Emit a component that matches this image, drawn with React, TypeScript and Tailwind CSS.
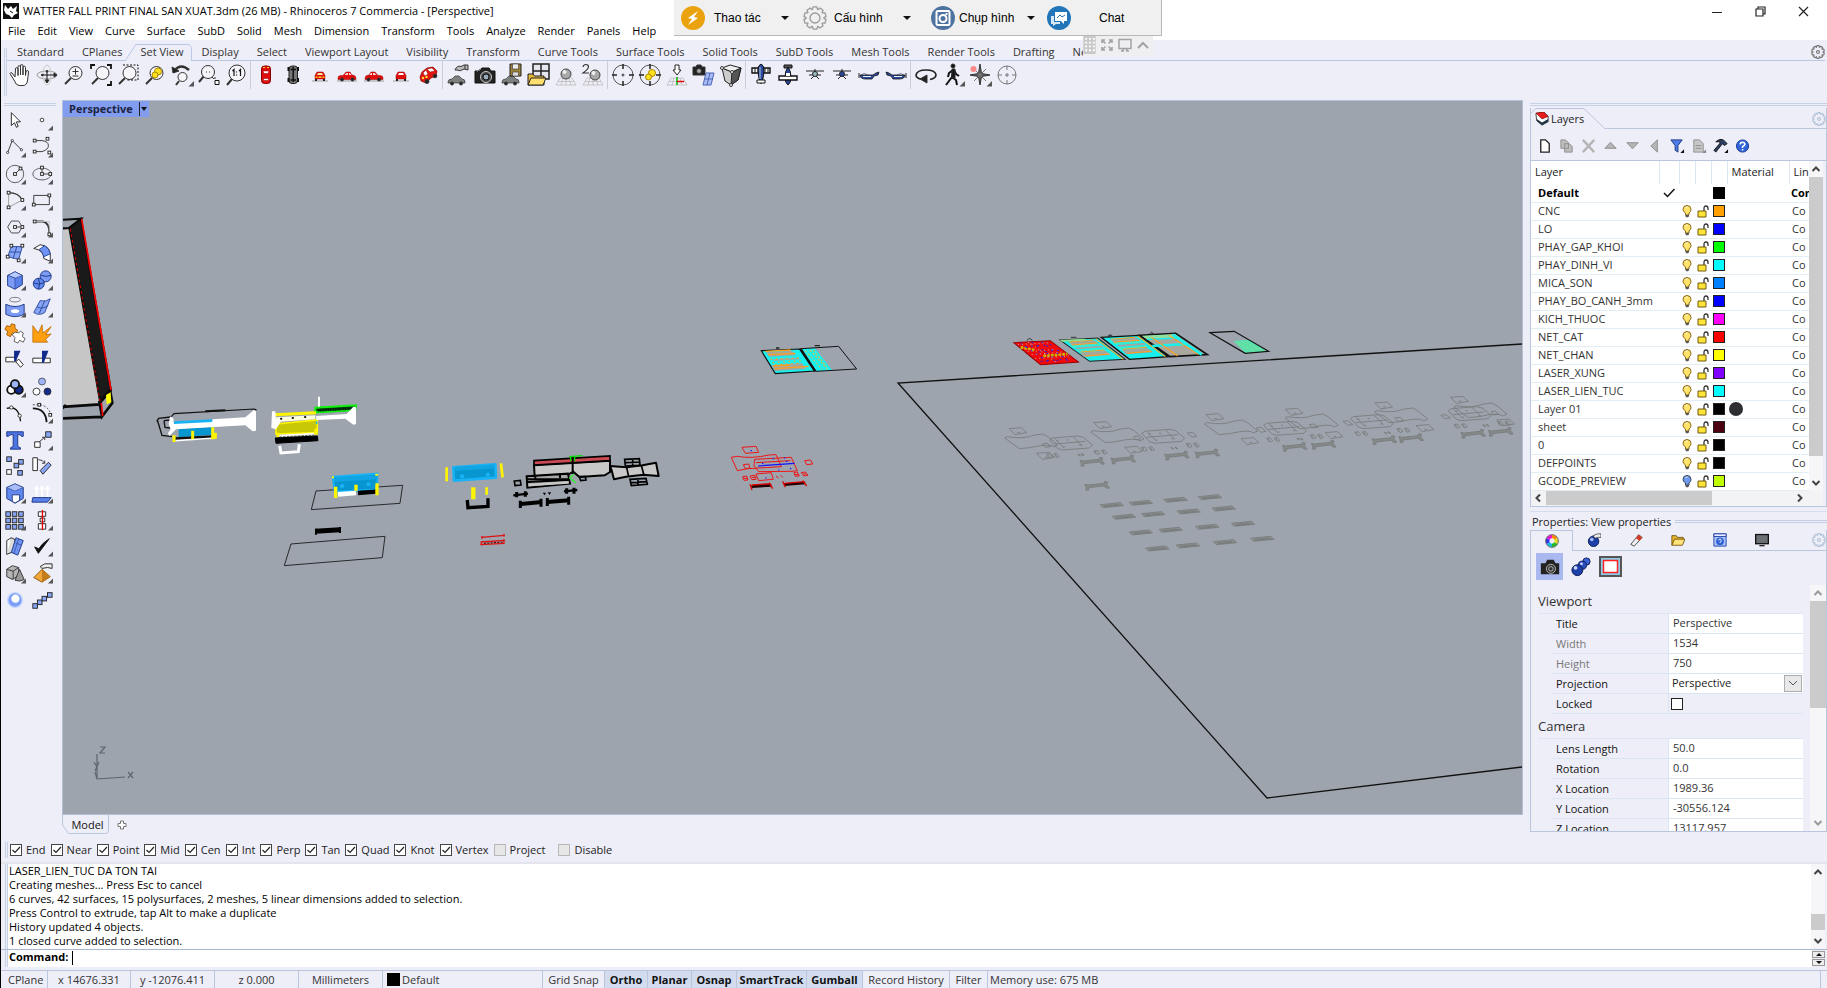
import React, { useState } from 'react';

type Kids = { children?: React.ReactNode };

const menus = ['File', 'Edit', 'View', 'Curve', 'Surface', 'SubD', 'Solid', 'Mesh', 'Dimension', 'Transform', 'Tools', 'Analyze', 'Render', 'Panels', 'Help'];

const tabs = ['Standard', 'CPlanes', 'Set View', 'Display', 'Select', 'Viewport Layout', 'Visibility', 'Transform', 'Curve Tools', 'Surface Tools', 'Solid Tools', 'SubD Tools', 'Mesh Tools', 'Render Tools', 'Drafting', 'New in V7'];

const layers = [
  { name: 'CNC', color: '#ff9f00' },
  { name: 'LO', color: '#0000ff' },
  { name: 'PHAY_GAP_KHOI', color: '#00ff00' },
  { name: 'PHAY_DINH_VI', color: '#00ffff' },
  { name: 'MICA_SON', color: '#007fff' },
  { name: 'PHAY_BO_CANH_3mm', color: '#0000ff' },
  { name: 'KICH_THUOC', color: '#ff00ff' },
  { name: 'NET_CAT', color: '#ff0000' },
  { name: 'NET_CHAN', color: '#ffff00' },
  { name: 'LASER_XUNG', color: '#7f00ff' },
  { name: 'LASER_LIEN_TUC', color: '#00ffff' },
  { name: 'Layer 01', color: '#000000', material: true },
  { name: 'sheet', color: '#4c0010' },
  { name: '0', color: '#000000' },
  { name: 'DEFPOINTS', color: '#000000' },
  { name: 'GCODE_PREVIEW', color: '#bfff00', off: true },
];

const snaps = ['End', 'Near', 'Point', 'Mid', 'Cen', 'Int', 'Perp', 'Tan', 'Quad', 'Knot', 'Vertex'];

const history = [
  'LASER_LIEN_TUC DA TON TAI',
  'Creating meshes... Press Esc to cancel',
  '6 curves, 42 surfaces, 15 polysurfaces, 2 meshes, 5 linear dimensions added to selection.',
  'Press Control to extrude, tap Alt to make a duplicate',
  'History updated 4 objects.',
  '1 closed curve added to selection.',
];

/* ---------- icon helpers ---------- */

const Icon = ({ children, small }: Kids & { small?: boolean }) => (
  <svg viewBox="0 0 24 24" className={small ? 'size-[22px] shrink-0' : 'size-6 shrink-0'} fill="none" stroke="#333" strokeWidth="1">{children}</svg>
);
const Corner = () => <path d="M24 18v5.500h-5.500z" fill="#555" stroke="none" />;
const Mag = () => (
  <>
    <path d="M9 15l-6 6" strokeWidth="2" />
    <circle cx="13.500" cy="10" r="6.500" fill="#f6f6fa" />
  </>
);

const SideCar = () => (
  <>
    <path d="M2 18h20" stroke="#999" />
    <path d="M3 15q0-2.500 3-2.500h2L11 9h4l2 3q4 0 4 3.500v1H3z" fill="#e00d0d" stroke="#900" strokeWidth=".5" />
    <path d="M9.500 12l2-2h1.500v2zM14 10h1l1.500 2H14z" fill="#ffd9d9" stroke="none" />
    <circle cx="7" cy="16.500" r="1.500" fill="#222" /><circle cx="17.500" cy="16.500" r="1.500" fill="#222" />
  </>
);
const FrontCar = ({ lit }: { lit?: boolean }) => (
  <>
    <path d="M4 18h16" stroke="#999" />
    <path d="M7 16v-3.500L9 9h6l2 3.500V16z" fill="#e00d0d" stroke="#900" strokeWidth=".5" />
    <path d="M9 12l1-2h4l1 2z" fill={lit ? '#ffe9a0' : '#fff'} stroke="none" />
    {lit && <path d="M7.500 13.500h2v1.500h-2zM14.500 13.500h2v1.500h-2zM10.500 13.500h3v1.500h-3z" fill="#ffd21f" stroke="none" />}
    <path d="M8 16v2M16 16v2" stroke="#222" strokeWidth="2" />
  </>
);
const GreyCar = () => (
  <>
    <path d="M2 19q0-3 4-3l3-3h4l3 3q3 0 3 3v1H2z" fill="#7d8280" stroke="#333" strokeWidth=".7" />
    <circle cx="6" cy="20.500" r="1.500" fill="#222" /><circle cx="15" cy="20.500" r="1.500" fill="#222" />
  </>
);
const Grid = () => <path d="M2 22l4-7h12l4 7zM9 15l-2 7M12 15v7M15 15l2 7M4 18.500h16" stroke="#b4b4b4" strokeWidth=".7" />;
const Target = () => (
  <>
    <circle cx="12" cy="12" r="10" stroke="#555" />
    <path d="M12 1v5M12 18v5M1 12h5M18 12h5" stroke="#222" strokeWidth="1.500" />
  </>
);
const PlaneSide = () => (
  <>
    <path d="M3 12q0 4 6 4h6l2-3 4-1 1-3-3 1-3 2z" fill="#29489f" stroke="#111" strokeWidth=".8" />
    <path d="M4 12q3-3 7 0z" fill="#cfe0ff" strokeWidth=".6" /><path d="M6 13.500h8" stroke="#eee" /><path d="M2 10v5" stroke="#222" />
  </>
);

const setViewIcons: (React.ReactNode | null)[] = [
  <path d="M7 14l-3-4q-1.500-1-2 .5L6 17q2 5.500 5 5.500h4q3.500 0 4.500-4.500l1-9q0-1.500-1.200-1.500T18 9l-.5 3.500V4.500q0-1.300-1.300-1.300T15 4.500V12 3q0-1.500-1.300-1.500T12.500 3v9-8q0-1.300-1.300-1.300T10 4v8.500V6q0-1.300-1.300-1.300T7.500 6z" fill="#fff" />,
  <>
    <ellipse cx="12" cy="12" rx="10" ry="4" stroke="#999" /><ellipse cx="12" cy="12" rx="4" ry="10" stroke="#ccc" />
    <path d="M12 8v10M7 12h13" stroke="#111" /><path d="M11 9l1-2 1 2zM10 17l2 3 2-3zM19 10l3 2-3 2zM8 11l-2 1 2 1z" fill="#111" />
  </>,
  <><Mag /><path d="M10.500 8.500h6M13.500 5.500v6M10.500 13h6" /></>,
  <><Mag /><path d="M2 6V2h4M18 2h4v4M22 18v4h-4" stroke="#111" strokeWidth="1.800" /></>,
  <><Mag /><path d="M7 2h15v15H11" stroke="#111" strokeDasharray="2 1.500" /></>,
  <><Mag /><circle cx="15" cy="8.500" r="3.500" fill="#ffe21f" stroke="#a80" /><circle cx="12" cy="12" r="3" fill="#ffe21f" stroke="#a80" /></>,
  <><path d="M5 7q6-7 14 0" strokeWidth="2.500" /><path d="M2 4l1 6 6-2z" fill="#222" /><path d="M9 18l-3 4" strokeWidth="2" /><circle cx="12.500" cy="14" r="4.500" fill="#f6f6fa" /><Corner /></>,
  <><path d="M7 13l-5 6" strokeWidth="2" /><circle cx="11" cy="9" r="6.500" fill="#f6f6fa" /><path d="M9 9h1M12 9h1M18 16v-2M15 14l2 2" /><path d="M18 17.500h4v4h-4z" fill="#fff" stroke="#111" /></>,
  <><path d="M8 16l-5 6" strokeWidth="2" /><circle cx="13" cy="10" r="8" fill="#f6f6fa" /><path d="M8.500 8l1.500-1.500V13M12.500 8.500v1M12.500 11.500v1M15 8l1.500-1.500V13" stroke="#111" strokeWidth="1.200" /></>,
  null,
  <><rect x="7.500" y="3" width="9" height="17.500" rx="3" fill="#e00d0d" stroke="#800" /><path d="M9 8h6l-1 2.500h-4zM10 15.500h4l1 2H9z" fill="#fff" stroke="#900" strokeWidth=".5" /><path d="M9 4.500h2M13 4.500h2" stroke="#fd3" /></>,
  <><rect x="8" y="3" width="8.500" height="17.500" rx="3" fill="#777" stroke="#222" /><path d="M12.200 4v15M9.500 6.500h5.500M9.500 17h5.500" stroke="#111" strokeWidth="1.500" /><path d="M7.500 4v4M17 4v4M7.500 15v4M17 15v4" stroke="#111" strokeWidth="2" /></>,
  <FrontCar lit />,
  <SideCar />,
  <g transform="matrix(-1 0 0 1 24 0)"><SideCar /></g>,
  <FrontCar />,
  <>
    <path d="M4 14l2-5 5-4 6-1 4 4-1 5-5 2-5 5-5-2z" fill="#e3140f" stroke="#800" strokeWidth=".7" />
    <path d="M11 6l5-1 3 3-5 1zM7 10l3-3 2 4-3 2z" fill="#fff" stroke="#900" strokeWidth=".5" />
    <circle cx="7" cy="15" r="1.200" fill="#fd3" stroke="none" /><circle cx="10.500" cy="14" r="1.200" fill="#fd3" stroke="none" />
    <circle cx="11" cy="18.500" r="2" fill="#222" /><circle cx="19" cy="13" r="1.800" fill="#222" />
  </>,
  null,
  <><GreyCar /><path d="M9 7q2-5 6-3.500l3-1.500 4 0v5l-4-1q-4 3-7 1z" fill="#bbb" /><path d="M19 2v4" /></>,
  <>
    <path d="M2 8h5l2-3h7l2 3h4v12H2z" fill="#222" stroke="#111" /><path d="M4 9q2-3 4-3" stroke="#777" />
    <circle cx="13" cy="14" r="5.500" fill="#444" stroke="#ccc" /><circle cx="13" cy="14" r="3" fill="#9ab" stroke="#111" />
  </>,
  <><GreyCar /><path d="M10 1h11v12H10z" fill="#9a8238" stroke="#222" /><path d="M12.500 1h6v5h-6z" fill="#eee" strokeWidth=".6" /><path d="M12.500 9h6v4h-6z" fill="#ddd" strokeWidth=".6" /></>,
  <>
    <path d="M6 1h16v15H6z" fill="#e6e6ee" stroke="#222" strokeWidth="1.500" /><path d="M14 1v15M6 8h16" stroke="#222" strokeWidth="1.500" />
    <path d="M1 22V11h5l1.500 2H17v9z" fill="#e7b93a" stroke="#222" /><path d="M1 22l3-7h15l-3 7z" fill="#ffdf6e" stroke="#222" />
  </>,
  <><Grid /><circle cx="12" cy="11" r="5" fill="#a8a8a8" stroke="#444" /><circle cx="10.500" cy="9" r="2" fill="#eee" stroke="none" /></>,
  <><Grid /><circle cx="14" cy="12" r="5" fill="#a8a8a8" stroke="#444" /><circle cx="12.500" cy="10" r="2" fill="#eee" stroke="none" /><path d="M2 4q.5-2.500 3-2.500T7.500 4Q7 6.500 2 10h6" strokeWidth="1.200" /></>,
  null,
  <><Target /><circle cx="12" cy="12" r="1" /></>,
  <><Target /><circle cx="14" cy="10" r="3.500" fill="#ffe21f" stroke="#a80" /><circle cx="10.500" cy="14" r="3" fill="#ffe21f" stroke="#a80" /></>,
  <><Grid /><path d="M10 7V2h4v5h2l-4 5-4-5z" fill="#fff" stroke="#222" /><path d="M12 14v8" stroke="#0b0" strokeWidth="1.500" /><path d="M12 18.500h7" stroke="#e00" strokeWidth="1.500" /></>,
  <><path d="M1 4h3l1-2h4l1 2h3v8H1z" fill="#222" /><circle cx="7" cy="8" r="2.500" fill="#aaa" /><path d="M14 10h8l-3 12h-8z" fill="#a9bdf5" stroke="#4a64b8" /><path d="M18 10l-3 12M13 16h8" stroke="#4a64b8" /></>,
  <><path d="M3 5l10 4 9-4-3 12-7 5-6-4z" fill="#ccc" stroke="#222" /><path d="M13 9l-1 13 7-5 3-12z" fill="#555" stroke="#222" /><path d="M3 5l8-3 11 3-9 4z" fill="#eee" stroke="#222" /><circle cx="13" cy="9" r="1.500" fill="#fff" /><circle cx="12" cy="22" r="1.500" fill="#fff" /><circle cx="3" cy="5" r="1.500" fill="#fff" /></>,
  null,
  <>
    <path d="M3 5h18v5H3z" fill="#fff" stroke="#111" strokeWidth="1.400" /><path d="M6 5v5M9 5v5M16 5v5M19 5v5" stroke="#111" />
    <path d="M12 1q3 1 3 6t-2 13h-2Q9 12 9 7t3-6z" fill="#29489f" stroke="#111" /><path d="M8 17h8v3H8z" fill="#fff" stroke="#111" /><path d="M11 4v12" stroke="#bcd" />
  </>,
  <>
    <path d="M8 2h8v3H8z" fill="#555" stroke="#111" /><path d="M12 4q3 4 3 10t-3 8q-3-2-3-8t3-10z" fill="#29489f" stroke="#111" /><path d="M3 13h18v4H3z" fill="#fff" stroke="#111" strokeWidth="1.400" /><path d="M10 10h4v3h-4z" fill="#fff" stroke="none" />
  </>,
  <><path d="M3 8h18M6 12h12" stroke="#222" /><circle cx="12" cy="11" r="2.500" fill="#9bb" stroke="#222" /><path d="M8 16l3-3M16 16l-3-3M12 6v3" stroke="#222" /></>,
  <><path d="M3 8h18M6 12h12" stroke="#222" /><circle cx="12" cy="11" r="2.500" fill="#29489f" stroke="#222" /><path d="M8 16l3-3M16 16l-3-3M12 6v3" stroke="#222" /></>,
  <PlaneSide />,
  <g transform="matrix(-1 0 0 1 24 0)"><PlaneSide /></g>,
  null,
  <><path d="M16 16.500q6-1 6-5Q21 7 12 7T2 12q0 3 5 4.200" stroke="#222" strokeWidth="1.600" /><path d="M13 12v8l-7-4z" fill="#222" /></>,
  <>
    <circle cx="12" cy="3" r="2" fill="#111" /><path d="M12 6l-1 8 4 3 1 5M11 14l-3 4-3 4M12 7l-4 3-1 4M13 7l2 4 3 2" stroke="#111" strokeWidth="2" /><path d="M11 6h3v9h-3z" fill="#111" /><Corner />
  </>,
  <><path d="M12 1l1.500 9.500L22 12l-8.500 1.500L12 22l-1.500-8.500L2 12l8.500-1.500z" fill="#666" /><path d="M6 6l12 12M18 6L6 18" stroke="#777" /><circle cx="5.500" cy="6" r="3" fill="#f88a8a" stroke="none" /><Corner /></>,
  <><circle cx="12" cy="12" r="9" stroke="#777" /><path d="M12 3v4M12 17v4M3 12h4M17 12h4M10 12h4M12 10v4" stroke="#777" /></>,
];

/* ---------- left palette ---------- */

const Dot = ({ x, y }: { x: number; y: number }) => <rect x={x - 1.5} y={y - 1.5} width="3" height="3" fill="#fff" stroke="#222" />;
const Sq = ({ x, y, f = '#88a4f4' }: { x: number; y: number; f?: string }) => <rect x={x} y={y} width="5" height="5" fill={f} stroke="#222" />;

const mainTools: React.ReactNode[] = [
  <path d="M8 4v14l3.500-3 2 5 2-1-2-5h4.500z" fill="#fff" stroke="#222" />,
  <><circle cx="12" cy="12" r="2" fill="#fff" /><Corner /></>,
  <><path d="M4 18L9 5l10 10" /><circle cx="4" cy="18" r="1.200" fill="#fff" /><circle cx="9" cy="5" r="1.200" fill="#fff" /><circle cx="19" cy="15" r="1.200" fill="#fff" /><Corner /></>,
  <><path d="M4 5h8q7 1 7 5.500T12 17H4" /><Dot x={4} y={5} /><Dot x={18} y={3} /><Dot x={4} y={17} /><Dot x={20} y={18} /><Corner /></>,
  <><circle cx="12" cy="12" r="9.500" stroke="#555" /><path d="M12 12l6-6" /><Dot x={12} y={12} /><Dot x={18} y={6} /><Corner /></>,
  <><ellipse cx="12" cy="12" rx="10" ry="6.500" stroke="#555" /><path d="M12 12V5M12 12h9" /><Dot x={12} y={12} /><Dot x={12} y={5} /><Dot x={21} y={12} /><Corner /></>,
  <><path d="M5 20V4" stroke="#999" /><path d="M5 4q11 0 15 8" strokeWidth="1.500" /><path d="M5 20l15-8" stroke="#999" /><Dot x={5} y={4} /><Dot x={5} y={20} /><Dot x={20} y={12} /><Corner /></>,
  <><path d="M3 7h17v10H3z" stroke="#333" /><Dot x={3} y={17} /><Dot x={20} y={7} /><Corner /></>,
  <><path d="M4 12l4-6.500h8l4 6.500-4 6.500H8z" stroke="#444" /><path d="M12 12h8" /><Dot x={12} y={12} /><Dot x={20} y={12} /><Corner /></>,
  <><path d="M3 6h10q7 1 7 13" strokeWidth="2" /><path d="M3 6h17v13" stroke="#bbb" /><Dot x={4} y={6} /><Dot x={20} y={20} /><Corner /></>,
  <><path d="M8 5h12l-4 14-12-3z" fill="#88a4f4" stroke="#29489f" /><path d="M14 5l-4 13M6 11h12" stroke="#29489f" /><Dot x={8} y={4} /><Dot x={20} y={4} /><Dot x={4} y={16} /><Dot x={16} y={20} /><Corner /></>,
  <><path d="M3 7l7-4q10 1 11 10v8l-7-3q0-9-11-11z" fill="#fff" stroke="#222" /><path d="M9 8l6-4q5 3 6 9l-7 3q-1-5-5-8z" fill="#6e93f2" stroke="#29489f" /><Corner /></>,
  <><path d="M4 7l8-4 8 4v10l-8 5-8-4z" fill="#5a80ea" stroke="#1b3480" /><path d="M4 7l8 3 8-3-8-4z" fill="#b9ccff" stroke="#1b3480" strokeWidth=".6" /><path d="M4 7l8 3v12l-8-4z" fill="#7b9bf5" stroke="#1b3480" strokeWidth=".6" /><Corner /></>,
  <><circle cx="16" cy="8" r="6" fill="#7b9bf5" stroke="#1b3480" /><circle cx="8.500" cy="16" r="6" fill="#6188ee" stroke="#1b3480" /><path d="M2.500 15q6 3 12 0M8 10q3 6 0 12M11 7q5 2 11 0" stroke="#1b3480" /><Corner /></>,
  <><ellipse cx="12" cy="4" rx="6" ry="2.500" stroke="#777" /><path d="M2 9q10 5 20 0v11q-10 5-20 0z" fill="#7b9bf5" stroke="#1b3480" /><ellipse cx="12" cy="16.500" rx="5.500" ry="3" fill="#fff" stroke="#7b9bf5" strokeWidth="2" /><Corner /></>,
  <><path d="M10 5q6 2 11-2l-6 15q-6 4-12 0z" fill="#88a4f4" stroke="#29489f" /><path d="M7 12q6 3 12-2M15 5l-6 14" stroke="#29489f" /><Corner /></>,
  <>
    <path d="M3 4l4 1 1-3 4 1v4l3 2-2 4-4-1-2 4-4-2 1-4-3-2z" fill="#f79a1c" stroke="#a65c00" />
    <path d="M12 11l4 1 2-2 3 2-1 4 3 2-2 4-4-2-2 3-4-2 1-4-3-3z" fill="#fff" stroke="#555" />
  </>,
  <path d="M2 22V4l6 8 4-9 1 9 9-7-6 9 6-1-6 6 2 3z" fill="#ff9f0f" stroke="#b26400" strokeWidth=".8" />,
  <><path d="M2 9h11v5H2z" fill="#fff" stroke="#222" /><path d="M13 14l3-3 5 6-3 3z" fill="#fff" stroke="#222" /><path d="M11 2h7l-5 11h-2z" fill="#122a8a" stroke="none" /></>,
  <><path d="M2 10h19v5H2z" fill="#fff" stroke="#222" /><path d="M12 2h7l-5 13h-2z" fill="#122a8a" stroke="none" /></>,
  <><circle cx="8" cy="15" r="4.500" fill="#fff" stroke="#111" strokeWidth="2" /><circle cx="16" cy="15" r="4.500" fill="#122a8a" stroke="#111" strokeWidth="2" /><circle cx="12" cy="9" r="4.500" fill="#9fb4f8" stroke="#111" strokeWidth="2" /><Corner /></>,
  <><circle cx="12" cy="6" r="3.800" fill="#9fb4f8" stroke="#556" /><circle cx="6" cy="17" r="3.800" fill="#fff" /><circle cx="18" cy="17" r="3.800" fill="#122a8a" /></>,
  <><path d="M3 7q13-4 15 14" stroke="#111" strokeWidth="1.500" /><circle cx="8" cy="6" r="1.800" fill="#fff" /><circle cx="17" cy="15" r="1.800" fill="#fff" /></>,
  <><path d="M2 7q14 0 15 15" stroke="#111" strokeWidth="2" /><path d="M2 3h8q11 2 12 14" strokeDasharray="2 2" /><Dot x={9} y={3} /><Dot x={21} y={14} /><Corner /></>,
  <path d="M3 3h18v5h-2q-.5-2-4-2v13l3 1.500V22H7v-1.500L10 19V6Q5.500 6 5 8H3z" fill="#4c74e2" stroke="#1b3480" />,
  <><path d="M4 14h6v6H4z" fill="#fff" stroke="#222" /><path d="M16 3h6v6h-6z" fill="#88a4f4" stroke="#222" /><path d="M9 14l6-5m-3 0h3v3" /><Corner /></>,
  <><Sq x={3} y={2} /><Sq x={16} y={5} /><Sq x={11} y={9} /><Sq x={3} y={16} f="#fff" /><Sq x={15} y={17} /></>,
  <><path d="M2 3h5v14H2z" fill="#fff" stroke="#222" /><path d="M10 17L19 8l3 3-9 10z" fill="#88a4f4" stroke="#222" /><path d="M8 5q5 0 7 4M15 6v3h-3" /></>,
  <><path d="M3 6l9-4 9 4v12l-9 5-9-5z" fill="#6188ee" stroke="#1b3480" /><path d="M3 6l9 4 9-4-9-4z" fill="#a9bdf8" stroke="#1b3480" strokeWidth=".6" /><path d="M9 14h8v6l-5 3-3-2z" fill="#fff" stroke="#1b3480" /><Corner /></>,
  <><path d="M2 17h17l3 0-4 5H1z" fill="#5a80ea" stroke="#1b3480" /><path d="M6 16V6M12 16V6M18 16V6M4 8l2-3 2 3M10 8l2-3 2 3M16 8l2-3 2 3" stroke="#fff" strokeWidth="1.800" /><Corner /></>,
  <><Sq x={2} y={3} /><Sq x={9} y={3} /><Sq x={16} y={3} /><Sq x={2} y={10} /><Sq x={9} y={10} /><Sq x={16} y={10} /><Sq x={2} y={17} /><Sq x={9} y={17} /><Sq x={16} y={17} /><Corner /></>,
  <><path d="M8 3h8v5H8zM10 10h5v4h-5zM8 16h8v6H8z" fill="#fff" stroke="#222" /><path d="M12.500 1v22" stroke="#e00" strokeWidth="1.500" /><Corner /></>,
  <><path d="M3 6l5-3v14l-5 4z" fill="#fff" stroke="#222" /><path d="M8 3l4 2-1 13-8 3" fill="#ddd" stroke="#222" /><path d="M13 3l8 3-6 16-7-3z" fill="#6e93f2" stroke="#1b3480" /><path d="M16 4l-5 16M13 9l6 2" stroke="#1b3480" strokeWidth=".6" /><Corner /></>,
  <><path d="M4 13l4 7L20 4q-8 5-11.500 11z" fill="#111" stroke="#111" /><Corner /></>,
  <><path d="M3 8l6-4 7 2v9l-7 4-6-3z" fill="#b5b5b5" stroke="#333" /><path d="M3 8l7 2 6-4M10 10v9" /><path d="M17 8l5 11q-4 3-10 1z" fill="#999" stroke="#333" /><Corner /></>,
  <><path d="M12 8l9 8-9 6-9-5z" fill="#f2a63a" stroke="#8a5500" /><path d="M12 8l9 8-9 6z" fill="#c47d1c" stroke="none" /><path d="M10 5l5-3h8v5l-5-1-6 1z" fill="#eee" stroke="#222" /><Corner /></>,
  <><circle cx="12" cy="12" r="8" fill="#7d9ff5" stroke="#c6d6ff" strokeWidth="1.500" /><circle cx="12.500" cy="10.500" r="4.500" fill="#fff" stroke="none" /></>,
  <><path d="M4 19L21 6" /><Sq x={2} y={16} /><Sq x={7} y={12} /><Sq x={12} y={8} /><Sq x={18} y={4} /></>,
];

/* ---------- small shared pieces ---------- */

// Ten-toothed cog outline around (cx, cy)
const cog = (cx: number, cy: number, inner: number, outer: number) => {
  const pts: string[] = [];
  for (let i = 0; i < 10; i++) {
    [[-0.3, inner], [-0.17, outer], [0.17, outer], [0.3, inner]].forEach(([off, r]) => {
      const a = ((i * 36) * Math.PI) / 180 + off;
      pts.push(`${(cx + r * Math.sin(a)).toFixed(2)} ${(cy - r * Math.cos(a)).toFixed(2)}`);
    });
  }
  return `M${pts.join('L')}z`;
};

const Gear = ({ className }: { className: string }) => (
  <svg viewBox="0 0 24 24" className={className} fill="none" stroke="currentColor" strokeWidth="1.300" strokeLinejoin="round">
    <path d={cog(12, 12, 8.8, 11.2)} /><circle cx="12" cy="12" r="5" />
  </svg>
);
const SmallGear = ({ className }: { className: string }) => (
  <svg viewBox="0 0 24 24" className={`size-[14px] ${className}`} fill="none" stroke="currentColor" strokeWidth="2" strokeLinejoin="round">
    <path d={cog(12, 12, 8.5, 11)} /><circle cx="12" cy="12" r="2.500" />
  </svg>
);

const Chevron = ({ d, faint }: { d: 'up' | 'down' | 'left' | 'right'; faint?: boolean }) => (
  <svg viewBox="0 0 10 10" className="size-[10px]" fill="none" stroke={faint ? '#9a9a9a' : '#444'} strokeWidth="2">
    <path d={{ up: 'M1.500 7L5 3.500 8.500 7', down: 'M1.500 3L5 6.500 8.500 3', left: 'M7 1.500L3.500 5 7 8.500', right: 'M3 1.500L6.500 5 3 8.500' }[d]} />
  </svg>
);

const ScrollBar = ({ className, above, thumb, below, faint }: { className: string; above: string; thumb: string; below: string; faint?: boolean }) => (
  <div className={`flex shrink-0 flex-col bg-[#f6f6f8] ${className}`}>
    <button className="grid h-4 shrink-0 place-items-center" aria-label="Scroll up"><Chevron d="up" faint={faint} /></button>
    <div className={above} />
    <div className={`bg-[#cbcbcb] ${thumb}`} />
    <div className={below} />
    <button className="grid h-4 shrink-0 place-items-center" aria-label="Scroll down"><Chevron d="down" faint={faint} /></button>
  </div>
);

const Drop = () => <svg viewBox="0 0 8 4" className="h-1 w-2"><path d="M0 0h8L4 4z" fill="#111" /></svg>;

/* ---------- 3D scene ---------- */

const Bone = ({ x, y }: { x: number; y: number }) => (
  <path transform={`translate(${x} ${y})`} d="M-34-5l10 2 46-5 2-6 8 2-2 8 8 10-8 1-8-7-44 5 0 7-8 1 0-9z" strokeWidth="2.500" fill="#868989" />
);
const Plate = ({ x, y }: { x: number; y: number }) => (
  <g transform={`translate(${x} ${y})`}>
    <path d="M-34-2l58-6 10 9-60 6z" fill="#8f9292" />
    <path d="M-24 1l44-4M-20 4l46-5" strokeDasharray="4 3" stroke="#66696a" />
  </g>
);
const Pads = ({ x, y }: { x: number; y: number }) => (
  <path transform={`translate(${x} ${y})`} d="M-20-4l10-2 8 9-8 4zM2-5l8-2 9 9-8 4zM-14-4v9M8-5l2 9" />
);
const Wing = ({ x, y }: { x: number; y: number }) => (
  <path transform={`translate(${x} ${y})`} d="M-64-14l6-4q50 8 76-4l28-4 16 9 28 24-12 6q-10-12-70 2l-30 3z" />
);
const Body = ({ x, y }: { x: number; y: number }) => (
  <path transform={`translate(${x} ${y})`} d="M-60-10l8-6 74-6 16 4 26 22-8 10-80 6-14-5zM-46 2l90-8M-44-14l26 28M8-20l28 28M-40-8h6M-10-10h6M-20 10h6M26 6h6" />
);
const Leaf = ({ x, y }: { x: number; y: number }) => (
  <path transform={`translate(${x} ${y})`} d="M-26-8l36-3 16 15-34 6zM-2 4l8-1" />
);

const cyanSheet = (
  <>
    <path d="M258 97l74-6 10 9-76 5zM276 113l78-6 6 5-78 6zM290 128l74-6 16 13-78 6z" fill="#a5a69e" />
    <path d="M258 96l70-6M266 105l76-6M292 126l70-6M306 138l70-6" stroke="#ff9f1c" strokeWidth="3" />
    <path d="M270 109l80-6M284 123l80-6" stroke="#8ddc8a" strokeWidth="2.500" strokeDasharray="6 4" />
    <path d="M336 86l80 62" stroke="#ff9f1c" strokeWidth="3" />
  </>
);

const Scene = () => (
  <svg viewBox="63 101 1459 713" preserveAspectRatio="xMinYMin slice" className="block size-full" fill="none">
    {/* world frame */}
    <path d="M1522 344L898 383l369 415 255-31" stroke="#111" strokeWidth="1.300" />

    {/* tall cabinet at the left edge */}
    <g transform="translate(0 90) scale(.3333 .338)" stroke="#0a0a0a">
      <path d="M180 410h28l90 517-118 6z" fill="#c6c6c6" stroke="none" />
      <path d="M180 384l63-3-35 27-28 2" strokeWidth="6" />
      <path d="M208 408l35-27 90 508-32 36z" fill="#1a1a1a" strokeWidth="6" />
      <path d="M180 938l120-8M180 972l126-5M198 932l-14 12M298 920l8 46 31-40-7-38-34 38" strokeWidth="8" />
      <path d="M318 902l14-8 2 30-14 6z" fill="#ff0" stroke="none" />
      <path d="M245 382l88 506M304 926l4 38" stroke="#f00" strokeWidth="5" />
      <path d="M211 410l90 515" stroke="#d00" strokeWidth="3" strokeDasharray="9 8" />
    </g>

    <g transform="translate(140 380) scale(.3333)">
      <path d="M50 124l6-9 36-4M52 120l14 46 30 4M72 122l3 20 16 2M72 122l18-2" stroke="#111" strokeWidth="4" />
      <path d="M94 110l8-9 240-14 6 2-6 12" stroke="#111" strokeWidth="3.500" />
      <path d="M196 94l60-3" stroke="#111" strokeWidth="6" />
      <path d="M98 124l120-6v14l-120 8z" fill="#19b3f5" />
      <path d="M116 146l106-6v24l-106 8z" fill="#0796cf" />
      <path d="M218 118l98-6 26-22 6 2v60l-10 2-22-18-208 12-20 20-4-8 8-12-6-16 4-22 10 4 2 18 114-6z" fill="#fff" />
      <path d="M106 172l114-6v10l-114 6z" fill="#111" />
      <path d="M106 182l120-8" stroke="#fff" strokeWidth="5" />
      <path d="M102 166v20M158 152v26M218 142v36M226 158v18" stroke="#fff500" strokeWidth="9" />

      <path d="M526 97v-14l122-7-2 14z" fill="#064d06" stroke="#0df00d" strokeWidth="6" />
      <path d="M534 91l106-6" stroke="#021" strokeWidth="8" strokeDasharray="4 1" />
      <path d="M537 50v30" stroke="#fff" strokeWidth="6" />
      <path d="M404 104l124-6" stroke="#fff500" strokeWidth="9" />
      <path d="M408 112l118-6v12l-116 8z" fill="#ffffe0" />
      <path d="M408 132l124-12v38l-124 4z" fill="#c9c806" stroke="#fff500" strokeWidth="5" />
      <path d="M528 108l92-6 20-22 8 2v50l-8 2-24-18-86 4zM396 94h10l2 24 20-2-20 32-14-4z" fill="#fff" />
      <path d="M423 116h1M458 114h1M495 111h1" stroke="#111" strokeWidth="6" strokeLinecap="round" />
      <path d="M530 124v8" stroke="#2bd" strokeWidth="5" />
      <path d="M414 158v14M528 146v18" stroke="#fff500" strokeWidth="10" />
      <path d="M418 168l104-6" stroke="#fff" strokeWidth="8" /><path d="M418 171l104-6" stroke="#221" strokeWidth="2" strokeDasharray="8 3" />
      <path d="M406 174l126-6 2 14-126 8z" fill="#000" stroke="#000" strokeWidth="3" />
      <path d="M419 197l4 22 52-4 3-22" stroke="#fff" strokeWidth="9" />

      <path d="M528 333l260-17-8 54-266 19z" stroke="#111" strokeWidth="2.500" />
      <path d="M578 290l134-9v48l-128 6z" fill="#0796cf" stroke="#19b3f5" strokeWidth="6" />
      <path d="M582 306l130-8v-12l-130 6z" fill="#11a5e4" />
      <path d="M606 318h1M685 313h1" stroke="#19b3f5" strokeWidth="12" strokeLinecap="round" />
      <path d="M594 343l54-4" stroke="#fff" strokeWidth="14" /><path d="M654 339l54-4" stroke="#000" strokeWidth="13" />
      <path d="M587 320v34M648 314v18M711 310v36" stroke="#fff500" strokeWidth="10" />
      <path d="M576 292h6M706 284h8" stroke="#fff500" strokeWidth="6" />

      <path d="M940 262l126-9 2 40-126 9z" fill="#0796cf" stroke="#19b3f5" strokeWidth="8" strokeLinejoin="round" />
      <path d="M946 267l118-8" stroke="#11a5e4" strokeWidth="12" />
      <path d="M966 289h1M1043 284h1" stroke="#19b3f5" strokeWidth="12" strokeLinecap="round" />
      <path d="M920 262v42M1083 250l5 42M1040 322v22" stroke="#fff500" strokeWidth="8" /><path d="M1000 322v36" stroke="#fff500" strokeWidth="13" />
      <path d="M982 360l2 23 60-4v-24" stroke="#000" strokeWidth="10" />

      <path d="M526 454l74-5" stroke="#000" strokeWidth="15" /><path d="M528 446v18M600 441v18" stroke="#000" strokeWidth="6" />
      <path d="M453 492l282-23-8 64-294 24z" stroke="#111" strokeWidth="2.500" />
      <path d="M1024 472l70-6M1024 486l70-5M1022 494l70-4" stroke="#e01010" strokeWidth="4" />
      <path d="M1026 468v8M1092 462v8M1024 484v12M1092 478v14" stroke="#e01010" strokeWidth="4" />
      <path d="M1032 490l58-4" stroke="#300" strokeWidth="3" strokeDasharray="6 4" />
    </g>

    <g transform="translate(500 320) scale(.3333)">
      {/* flattened cabinet panels */}
      <path d="M102 436l228-14v34l-16 10-76 5-18-16-14 8-102 6z" fill="#c8c8c8" stroke="#000" strokeWidth="6" />
      <path d="M102 422l228-14v14l-228 13z" fill="#c94a52" stroke="#000" strokeWidth="5" />
      <path d="M80 469l124-8 6 30-128 12z" fill="#a8a8a8" />
      <path d="M80 469l124-8 6 30-128 12zM82 478h124M84 486l124-6M106 464v12M180 462v12M218 412v50" stroke="#000" strokeWidth="6" />
      <path d="M86 492l120-9v8l-120 8z" fill="#c8c8c8" />
      <path d="M330 438l50 4 48-6 40-8 8 40-46-4-52 6-36 8-8-30z" fill="#c8c8c8" stroke="#000" strokeWidth="6" strokeLinejoin="round" />
      <path d="M374 418l44-2 2 20-44 2zM376 428l44-2M390 478l48-3 4 18-48 4zM392 488l48-3M398 416v20M414 476v20M380 442l6 28M424 436l8 30" stroke="#000" strokeWidth="5" />
      <path d="M43 483l18-2 2 14-18 2zM238 470h18l2 10-16 2z" stroke="#000" strokeWidth="5" />
      <path d="M62 552l64-6M142 546l66-5" stroke="#000" strokeWidth="12" />
      <path d="M61 542v22M123 536v24M142 534v24M206 530v24" stroke="#000" strokeWidth="9" />
      <path d="M40 526l44-5M192 514l40-4" stroke="#000" strokeWidth="7" /><path d="M50 516v16M76 514v16M200 505v16M222 503v18" stroke="#000" strokeWidth="9" />
      <path d="M128 518h10l-4 8zM143 517h10l-4 8z" fill="#000" />
      <path d="M208 410l40-3M212 410v14M224 410v14" stroke="#0d0" strokeWidth="4" />
      <path d="M208 474l14-10M208 474l20 14" stroke="#3e3" strokeWidth="4" />

      {/* red unfolded parts */}
      <g stroke="#ee1515" strokeWidth="3">
        <path d="M694 412l18-3q40 8 96-4l20-1 16 36-100 6-32 6zM726 382l42-3 8 18-40 3zM764 418l110-6 18 40-16 2-100 1-14-18zM768 428l104-6M768 462l46-4 6 20-44 4zM914 422l18-2 6 12-18 2zM730 434l16-2 4 12-14 2z" />
        <path d="M728 470l12-2 4 12-12 1zM750 468l14-2 4 12-12 1zM882 458l10-2 6 12-12 1zM904 458l12-2 8 10-12 2zM730 475h14M756 472h12M884 464h12M910 462h10M828 468l8 6M842 466l6 6" />
        <path d="M754 500l60-4M852 494l64-5" stroke="#200" strokeWidth="8" /><path d="M750 492l6 18M808 488l10 18M848 484l8 18M908 482l12 16M756 495l56-4M854 490l60-5" stroke="#d00" strokeWidth="4" />
        <path d="M774 438l110-8M752 392h4M786 430h4M818 416h4M852 414h4M858 424h4M870 446h4M834 450h4M796 474h4" stroke="#11f" strokeWidth="3.500" />
      </g>

      {/* cut sheets */}
      <path d="M784 92l116-5 44 66-118 8z" fill="#19f0ee" stroke="#111" strokeWidth="3.500" />
      <path d="M798 97l78-5 12 14-80 4zM814 136l92-7 12 18-94 6zM818 118l78-5 4 5-78 5z" fill="#a3a79f" />
      <path d="M796 94l76-4M804 104l82-4M824 146l102-7M820 138l50-3" stroke="#ff9f1c" strokeWidth="4" />
      <path d="M812 118l88-5M818 128l92-6M826 134l70-4" stroke="#ff9f1c" strokeWidth="4" strokeDasharray="4 12" />
      <path d="M906 86l38-2 52 66-46 4z" fill="#19f0ee" />
      <path d="M916 92l50 56M930 90l52 58M940 90l40 50" stroke="#b9c46a" strokeWidth="4" strokeDasharray="7 5" />
      <path d="M904 86l112-7 54 68-122 7z" stroke="#111" strokeWidth="3" /><path d="M900 86l46 68" stroke="#111" strokeWidth="7" />
      <path d="M828 84h10M944 77h16" stroke="#222" strokeWidth="4" />
    </g>

    <g transform="translate(980 310) scale(.3444 .3333)">
      {/* nested sheets */}
      <path d="M98 98l106-6 82 64-110 8z" fill="#f20a0a" stroke="#900" strokeWidth="3" />
      <path d="M118 112l40 8M184 138l70-6" stroke="#c9b400" strokeWidth="8" strokeDasharray="8 3" />
      <path d="M118 100l80 56M150 96l80 60M178 96l80 58M130 110l80-6M170 126l70-6M176 154l90-8" stroke="#3322d8" strokeWidth="3" strokeDasharray="6 12" />
      <path d="M110 104l94-6M126 126l94-8M150 134l90-8M160 146l100-8M140 96l80 60" stroke="#b9a6a6" strokeWidth="3" strokeDasharray="3 9" />
      <path d="M232 90l110-6 80 64-104 6z" fill="#19f0ee" stroke="#222" strokeWidth="3" />
      {cyanSheet}
      <path d="M232 90l70-4 10 5-74 4z" fill="#8fe08a" />
      <path d="M352 82l110-6 84 64-112 8z" fill="#19f0ee" stroke="#111" strokeWidth="4" />
      <g transform="translate(122 -8)">{cyanSheet}</g>
      <path d="M464 76l104-6 92 64-108 6z" fill="#a8a89e" stroke="#111" strokeWidth="5" />
      <path d="M470 77l96-5 12 9-94 6z" fill="#8fe0a0" />
      <path d="M560 74l84 60M500 108l100-6" stroke="#19f0ee" strokeWidth="8" />
      <path d="M484 88l96-4" stroke="#19f0ee" strokeWidth="4" />
      <path d="M498 82l76 56M548 76l86 58" stroke="#ff9f1c" strokeWidth="3" />
      <path d="M136 91l8-6 8 6M264 82h16M372 76h12M372 82l8-8M490 72h14l-8-7" stroke="#222" strokeWidth="2.500" />
      <path d="M736 92l48-3 50 36-64 4z" fill="#59e0ac" /><path d="M744 98l56 26M760 94l60 28" stroke="#8fe08a" strokeWidth="3" strokeDasharray="4 4" />
      <path d="M668 68l70-4 100 60-68 6z" stroke="#111" strokeWidth="3.500" />

      {/* shadowed parts on the far plane */}
      <g stroke="#787b7a" strokeWidth="2.500">
        <Wing x={136} y={398} /><Wing x={386} y={380} /><Wing x={716} y={356} /><Wing x={950} y={338} /><Wing x={1210} y={320} /><Wing x={1440} y={305} />
        <Body x={262} y={400} /><Body x={530} y={380} /><Body x={884} y={356} /><Body x={1136} y={336} /><Body x={1420} y={312} />
        <Leaf x={110} y={364} /><Leaf x={356} y={346} /><Leaf x={682} y={322} /><Leaf x={912} y={306} /><Leaf x={1172} y={287} /><Leaf x={1392} y={270} />
        <Leaf x={190} y={438} /><Leaf x={446} y={420} /><Leaf x={784} y={394} /><Leaf x={1028} y={376} /><Leaf x={1292} y={355} /><Leaf x={1526} y={338} />
        <Pads x={212} y={437} /><Pads x={350} y={427} /><Pads x={488} y={417} /><Pads x={618} y={406} /><Pads x={852} y={389} /><Pads x={978} y={380} /><Pads x={1108} y={371} /><Pads x={1230} y={361} /><Pads x={1396} y={348} /><Pads x={1522} y={340} />
        <path d="M284 432l8 6M294 431l8 6M554 412l8 6M566 411l8 6M920 384l8 6M930 384l8 6M1174 366l8 6M1184 365l8 6M1460 344l8 6M1470 343l8 6" strokeWidth="4" />
        <path d="M180 402l16-2 10 10-16 2zM446 380l12-2 8 9-14 3zM602 369l16-2 12 12-14 2zM802 354l14-2 14 12-14 3zM956 344l14-2 12 10-16 2zM1054 334l14-2 14 12-14 2zM1204 324l16-2 10 10-16 2zM1338 316l14-2 14 10-16 2zM1484 305l12-2 10 10-16 2z" />
        <Bone x={324} y={456} /><Bone x={414} y={449} /><Bone x={570} y={437} /><Bone x={658} y={431} /><Bone x={912} y={411} /><Bone x={996} y={405} /><Bone x={1172} y={391} /><Bone x={1250} y={385} /><Bone x={1430} y={372} /><Bone x={1510} y={366} /><Bone x={338} y={528} />
        <Plate x={383} y={586} /><Plate x={467} y={579} /><Plate x={568} y={570} /><Plate x={668} y={562} />
        <Plate x={418} y={621} /><Plate x={503} y={613} /><Plate x={606} y={605} /><Plate x={708} y={596} />
        <Plate x={467} y={668} /><Plate x={554} y={660} /><Plate x={660} y={651} /><Plate x={764} y={642} />
        <Plate x={515} y={716} /><Plate x={604} y={707} /><Plate x={712} y={697} /><Plate x={820} y={687} />
      </g>
    </g>

    {/* axis tripod */}
    <path d="M97 779V754M97 779l28-2M97 779l-2-7M94 762l3 5M99 762l-4 9" stroke="#5e656d" strokeWidth="1.200" />
    <path d="M100 747h5l-5 6h5M128 772l5 6M133 772l-5 6" stroke="#5e656d" strokeWidth="1.200" />
  </svg>
);

/* ---------- floating support bar ---------- */

const SupportBar = () => (
  <div className="absolute left-[673px] top-0 font-['Liberation_Sans',Arial,sans-serif] text-xs text-black">
    <div className="flex h-9 w-[488px] items-center border-b border-r border-[#b9b9b9] bg-[#f0f0f0] pl-[7px]">
      <button className="flex w-[108px] items-center gap-[9px]">
        <svg viewBox="0 0 24 24" className="size-6"><circle cx="12" cy="12" r="12" fill="#eaa30f" /><path d="M17 5L7 12l4 1-4 6 10-7-4-1z" fill="#fff" /></svg>
        Thao tác
        <span className="ml-auto"><Drop /></span>
      </button>
      <button className="ml-[14px] flex w-[108px] items-center gap-[7px]">
        <Gear className="size-6 text-[#9a9a9a]" />
        Cấu hình
        <span className="ml-auto"><Drop /></span>
      </button>
      <button className="ml-5 flex w-[104px] items-center gap-1">
        <svg viewBox="0 0 24 24" className="size-6" fill="none" stroke="#fff">
          <circle cx="12" cy="12" r="12" fill="#4e73a0" stroke="none" /><rect x="5.500" y="5" width="13" height="14" rx="1.500" strokeWidth="2" /><circle cx="12" cy="12.500" r="3.500" strokeWidth="2" /><path d="M14.500 8h2" strokeWidth="2" />
        </svg>
        Chụp hình
        <span className="ml-auto"><Drop /></span>
      </button>
      <button className="ml-3 flex items-center gap-7">
        <svg viewBox="0 0 24 24" className="size-6">
          <circle cx="12" cy="12" r="12" fill="#2175b8" /><path d="M8 6h12v9h-3v3l-3-3H8z" fill="#fff" /><path d="M4 10h3v6h6v2H9l-3 2v-2H4z" fill="#d5e6f5" /><path d="M10 12l3-3 2 2 3-2" stroke="#2175b8" fill="none" />
        </svg>
        Chat
      </button>
    </div>
    <div className="ml-[409px] flex h-5 w-[70px] items-center justify-between bg-[#efeff1] pb-[2px] pr-1 text-[#a3a3a3]">
      <svg viewBox="0 0 13 19" className="h-[18px] w-[13px]"><path d="M0 0h13v19H0z" fill="#c9c9c9" /><path d="M2 2h2v2H2zM6 2h2v2H6zM10 2h2v2h-2zM2 6h2v2H2zM6 6h2v2H6zM10 6h2v2h-2zM2 10h2v2H2zM6 10h2v2H6zM10 10h2v2h-2zM2 14h2v2H2zM6 14h2v2H6zM10 14h2v2h-2z" fill="#fff" /></svg>
      <svg viewBox="0 0 12 12" className="size-3" fill="none" stroke="currentColor" strokeWidth="1.600"><path d="M1 1l10 10M11 1L1 11M1 4V1h3M8 1h3v3M11 8v3H8M4 11H1V8" /><path d="M6 4l2 2-2 2-2-2z" fill="#efeff1" stroke="#efeff1" /></svg>
      <svg viewBox="0 0 14 14" className="size-[14px]" fill="none" stroke="currentColor" strokeWidth="1.500"><path d="M1 1.500h12v9H1zM4 13l2-2M10 13l-2-2M3 13h3M8 13h3" /></svg>
      <svg viewBox="0 0 12 8" className="h-2 w-3" fill="none" stroke="currentColor" strokeWidth="2"><path d="M1 7l5-5 5 5" /></svg>
    </div>
  </div>
);

/* ---------- right side panels ---------- */

const Bulb = ({ off }: { off?: boolean }) => (
  <svg viewBox="0 0 10 13" className="mx-auto h-[13px] w-[10px]">
    <path d="M5 .5Q9 .5 9 4.500 9 6.500 7 8v2H3.500V8Q1 6.500 1 4.500 1 .5 5 .5z" fill={off ? '#6e9bf0' : '#ffe36b'} stroke={off ? '#345' : '#8a6414'} />
    <path d="M3.500 3q1-1.500 2-1" stroke="#fff" fill="none" /><path d="M3.500 10h3.500v1.500L5 12.500 3.500 11.500z" fill="#555" />
  </svg>
);
const Lock = () => (
  <svg viewBox="0 0 12 13" className="mx-auto h-[13px] w-3">
    <path d="M7 6V3.500Q7 1 9 1t2 2.500V5" fill="none" stroke="#333" strokeWidth="1.300" /><path d="M1 6h8v6H1z" fill="#ffe438" stroke="#6e5a10" />
  </svg>
);
const CheckMark = () => <svg viewBox="0 0 12 10" className="mx-auto h-[10px] w-3" fill="none" stroke="#111" strokeWidth="1.500"><path d="M1 5l3.500 3.500L11.500 1" /></svg>;

const layerTools: { label: string; art: React.ReactNode }[] = [
  { label: 'New layer', art: <path d="M4 2h5l4 4v9H4z" fill="#fff" stroke="#222" strokeWidth="1.400" /> },
  { label: 'New sublayer', art: <path d="M2 2h5l3 3v6H2zM6 6h5l3 3v6H6z" fill="#bdbdbd" stroke="#8f8f8f" /> },
  { label: 'Delete', art: <path d="M2 2l12 13M14 2L2 15" stroke="#b5b5b5" strokeWidth="2.500" /> },
  { label: 'Move up', art: <path d="M8 4.500l6 6.500H2z" fill="#b5b5b5" stroke="#8f8f8f" /> },
  { label: 'Move down', art: <path d="M8 11.500L2 5h12z" fill="#b5b5b5" stroke="#8f8f8f" /> },
  { label: 'Move out', art: <path d="M4 8.500L11 2v13z" fill="#b5b5b5" stroke="#8f8f8f" /> },
  { label: 'Filter', art: <><path d="M2 2h12L9.500 8v7L6.500 13V8z" fill="#4f7be8" stroke="#1b3480" /><path d="M16 12v4h-4z" fill="#111" /></> },
  { label: 'Page', art: <><path d="M3 2h6l4 4v9H3z" fill="#c6c6c6" stroke="#8f8f8f" /><path d="M5 8h6M5 11h6" stroke="#8f8f8f" /><path d="M16 12v4h-4z" fill="#888" /></> },
  { label: 'Tools', art: <><path d="M3 4q4-4 8-2l4 4-3 2-2-2-7 9-2-2L8 5 6 4z" fill="#2c3f66" stroke="#111" /><path d="M16 12v4h-4z" fill="#111" /></> },
  { label: 'Help', art: <><circle cx="8" cy="8.500" r="6.500" fill="#2f62d8" stroke="#173a94" /><path d="M5.500 7q0-2.500 2.500-2.500T10.500 7Q10 8.500 8 9v1.500M8 11.800v1.500" stroke="#fff" strokeWidth="1.600" fill="none" /></> },
];

const LayersPanel = () => (
  <section className="flex flex-col border-x border-b border-[#b9c6de]">
    <div className="relative flex h-[21px] items-center">
      <svg viewBox="0 0 296 21" preserveAspectRatio="none" className="absolute inset-0 size-full" fill="none" stroke="#b9c6de"><path d="M0 5L5 .5h48l21 20h222" /></svg>
      <svg viewBox="0 0 16 16" className="relative ml-1 size-[14px]">
        <path d="M1 2l9-2 5 5v6l-7 4-6-5z" fill="#fff" stroke="#333" /><path d="M1 1l9-1 5 5-7 3z" fill="#e81c1c" stroke="#600" strokeWidth=".6" /><path d="M2 8l6 4 7-4v3l-7 4-6-5z" fill="#234" />
      </svg>
      <h2 className="relative ml-[2px] text-[#222]">Layers</h2>
      <SmallGear className="relative ml-auto text-[#b3c3d8]" />
    </div>
    <div className="flex h-8 items-center gap-[6px] border-b border-[#b9c6de] pl-[6px] pt-[2px]">
      {layerTools.map((t) => (
        <button key={t.label} aria-label={t.label}><svg viewBox="0 0 17 17" className="size-4" fill="none">{t.art}</svg></button>
      ))}
    </div>
    <div className="flex">
      <div className="min-w-0 flex-1 overflow-hidden bg-white">
        <table className="w-full table-fixed border-collapse">
          <colgroup>
            <col /><col className="w-5" /><col className="w-4" /><col className="w-4" /><col className="w-4" /><col className="w-[62px]" /><col className="w-5" />
          </colgroup>
          <thead>
            <tr className="h-[23px] text-left">
              <th className="border-r border-[#dbe6f2] pb-[2px] pl-1 font-normal">Layer</th>
              <th className="border-r border-[#dbe6f2]" /><th className="border-r border-[#dbe6f2]" /><th className="border-r border-[#dbe6f2]" /><th className="border-r border-[#dbe6f2]" />
              <th className="border-r border-[#dbe6f2] pb-[2px] pl-1 font-normal">Material</th>
              <th className="overflow-hidden pb-[2px] pl-1 font-normal">Lin</th>
            </tr>
          </thead>
          <tbody className="text-[#333]">
            <tr className="h-[18px] border-b border-[#e3eef4] font-bold text-black">
              <td className="pl-[7px]">Default</td><td><CheckMark /></td><td /><td />
              <td><span className="mx-auto block size-3 bg-black" /></td><td /><td className="overflow-hidden pl-[2px]">Con</td>
            </tr>
            {layers.map((l) => (
              <tr key={l.name} className="h-[18px] border-b border-[#e3eef4]">
                <td className="whitespace-nowrap pl-[7px]">{l.name}</td>
                <td />
                <td><Bulb off={l.off} /></td>
                <td><Lock /></td>
                <td><span className="mx-auto block size-3 border border-[#222]" style={{ background: l.color }} /></td>
                <td className="pl-[2px]">{l.material && <span className="block size-[14px] rounded-full bg-[#2d2f31]" />}</td>
                <td className="overflow-hidden pl-[3px]">Co</td>
              </tr>
            ))}
          </tbody>
        </table>
      </div>
      <ScrollBar className="mr-[3px] w-[14px]" above="" thumb="grow-[15]" below="grow" />
    </div>
    <div className="mr-[3px] flex h-[15px] items-center bg-[#f3f3f6] pl-[2px] pr-[18px]">
      <button aria-label="Scroll left"><Chevron d="left" /></button>
      <div className="ml-[3px] h-[14px] w-[166px] bg-[#cbcbcb]" />
      <button className="ml-auto" aria-label="Scroll right"><Chevron d="right" /></button>
    </div>
  </section>
);

const propTabs: { label: string; art: React.ReactNode }[] = [
  { label: 'Object', art: <g strokeWidth="4"><path d="M8 3a5 5 0 0 1 4.300 2.500" stroke="#f80" /><path d="M12.300 5.500a5 5 0 0 1 0 5" stroke="#e0e020" /><path d="M12.300 10.500A5 5 0 0 1 8 13" stroke="#2b2" /><path d="M8 13a5 5 0 0 1-4.300-2.500" stroke="#1bd" /><path d="M3.700 10.500a5 5 0 0 1 0-5" stroke="#33e" /><path d="M3.700 5.500A5 5 0 0 1 8 3" stroke="#e1c" /><circle cx="8" cy="8" r="7.300" stroke="#333" strokeWidth=".8" /></g> },
  { label: 'Material', art: <><circle cx="7.500" cy="9.500" r="6" fill="#1d3fa8" stroke="#0a1a50" /><circle cx="5.500" cy="7.500" r="2" fill="#a8c0ff" /><path d="M7 3l5-2h4v4h-3l-4 1z" fill="#eee" stroke="#222" strokeWidth=".8" /></> },
  { label: 'Decals', art: <><path d="M2 13l9-11 4 3-9 10z" fill="#eee" stroke="#444" /><path d="M8 6l4 3 3-4-4-3z" fill="#d43a22" /></> },
  { label: 'Libraries', art: <><path d="M1 14V3h5l1 2h7v3" fill="#e8b52e" stroke="#6e5208" /><path d="M1 14l3-7h12l-3 7z" fill="#ffe27a" stroke="#6e5208" /></> },
  { label: 'Help', art: <><path d="M1 1h14v14H1z" fill="#a9c0f5" stroke="#1d3fa8" /><path d="M1 1h14v3H1z" fill="#e8eeff" stroke="#1d3fa8" /><circle cx="8" cy="9.500" r="4.500" fill="#2f62d8" /><path d="M6.500 8.500q0-1.500 1.500-1.500t1.500 1.500T8 10.500v1" stroke="#fff" /></> },
  { label: 'Display', art: <><path d="M0 1h16v12H0z" fill="#111" /><path d="M1.500 2.500h13v9h-13z" fill="#6b7075" /><path d="M5 14.500h6" stroke="#222" strokeWidth="1.500" /></> },
];

const Row = ({ id, label, dim, children }: { id: string; label: string; dim?: boolean } & Kids) => (
  <div className="ml-[14px] flex h-5 shrink-0 items-stretch border-b border-[#dbe6f2]">
    <label htmlFor={id} className={`w-[116px] pl-1 leading-5 ${dim ? 'text-[#777]' : 'text-[#111]'}`}>{label}</label>
    <div className="flex min-w-0 flex-1 items-stretch border-l border-[#dbe6f2]">{children}</div>
  </div>
);
const TextRow = ({ label, value, dim }: { label: string; value: string; dim?: boolean }) => (
  <Row id={label} label={label} dim={dim}>
    <input id={label} defaultValue={value} readOnly={dim} className="w-full min-w-0 bg-white pl-1 text-[#333] outline-none" />
  </Row>
);

const PropertiesPanel = () => (
  <>
    <div className="mt-1 border-t border-[#d5dcec]" />
    <div className="mt-[2px] flex h-4 items-center gap-1 pl-[2px]">
      <h2 className="whitespace-nowrap text-[#222]">Properties: View properties</h2>
      <div className="h-[3px] flex-1 border-y border-[#c3cee2]" />
    </div>
    <section className="flex min-h-0 flex-1 flex-col border-x border-b border-[#b9c6de]">
      <div className="flex h-[21px] items-stretch border-[#b9c6de]">
        {propTabs.map((t, i) => (
          <button key={t.label} aria-label={t.label} className={`grid w-[42px] shrink-0 place-items-center border-[#b9c6de] ${i === 0 ? 'border-r border-t' : 'border-b'}`}>
            <svg viewBox="0 0 16 16" className="size-[14px]" fill="none">{t.art}</svg>
          </button>
        ))}
        <div className="flex flex-1 items-center justify-end border-b border-[#b9c6de]"><SmallGear className="text-[#b3c3d8]" /></div>
      </div>
      <div className="flex h-[34px] shrink-0 items-center gap-2 pb-[2px] pl-[5px]">
        <button aria-label="View" className="grid size-[27px] place-items-center bg-[#a9b8ee]">
          <svg viewBox="0 0 24 24" className="size-[22px]" fill="none">
            <path d="M2 8h5l2-4h7l2 4h4v12H2z" fill="#222" /><circle cx="13" cy="14" r="5" fill="#333" stroke="#bbb" /><circle cx="13" cy="14" r="2.500" stroke="#bbb" />
          </svg>
        </button>
        <button aria-label="Material">
          <svg viewBox="0 0 22 22" className="size-5"><circle cx="17" cy="5" r="4" fill="#3a64d8" stroke="#0a1a50" /><circle cx="12.500" cy="9" r="4.500" fill="#2a50c0" stroke="#0a1a50" /><circle cx="7" cy="14.500" r="6" fill="#1d3fa8" stroke="#0a1a50" /><circle cx="5" cy="12" r="2" fill="#cdd9ff" /><circle cx="11.500" cy="7.500" r="1.500" fill="#cdd9ff" /></svg>
        </button>
        <button aria-label="Wallpaper">
          <svg viewBox="0 0 23 21" className="h-[21px] w-[23px]" fill="none"><path d="M1 1h21v19H1z" fill="#8ecbe8" stroke="#555" strokeWidth="2" /><path d="M4.500 4.500h14v12h-14z" fill="#fff" stroke="#f22" strokeWidth="1.500" /></svg>
        </button>
      </div>
      <div className="flex min-h-0 flex-1">
        <div className="flex min-w-0 flex-1 flex-col overflow-hidden pl-[7px] pr-[7px]">
          <h3 className="flex h-[29px] shrink-0 items-end border-b border-[#dbe6f2] pb-1 text-[13px] leading-4 text-[#333]">Viewport</h3>
          <TextRow label="Title" value="Perspective" />
          <TextRow label="Width" value="1534" dim />
          <TextRow label="Height" value="750" dim />
          <Row id="projection" label="Projection">
            <div className="relative flex flex-1 bg-white">
              <select id="projection" defaultValue="Perspective" className="w-full appearance-none pl-[3px] text-[#222] outline-none">
                <option>Parallel</option>
                <option>Perspective</option>
                <option>Two Point Perspective</option>
              </select>
              <span className="pointer-events-none absolute right-px top-px grid h-[17px] w-[18px] place-items-center border border-[#adadad] bg-[#e8e8ea]">
                <svg viewBox="0 0 10 10" className="size-[10px]" fill="none" stroke="#555"><path d="M1 3l4 4 4-4" /></svg>
              </span>
            </div>
          </Row>
          <Row id="locked" label="Locked">
            <input id="locked" type="checkbox" className="ml-[2px] mt-1 size-3 appearance-none border border-[#222] bg-white" />
          </Row>
          <h3 className="flex h-[25px] shrink-0 items-end border-b border-[#dbe6f2] pb-1 text-[13px] leading-4 text-[#333]">Camera</h3>
          <TextRow label="Lens Length" value="50.0" />
          <TextRow label="Rotation" value="0.0" />
          <TextRow label="X Location" value="1989.36" />
          <TextRow label="Y Location" value="-30556.124" />
          <TextRow label="Z Location" value="13117.957" />
        </div>
        <ScrollBar faint className="w-4" above="" thumb="grow-[107]" below="grow-[107]" />
      </div>
    </section>
  </>
);

/* ---------- status bar ---------- */

const Pane = ({ className, on, children }: { className: string; on?: boolean } & Kids) => (
  <button className={`flex shrink-0 items-center whitespace-nowrap border-r border-[#b9c6de] ${on ? 'bg-[#d3dcef] font-bold text-[#111]' : 'text-[#333]'} ${className}`}>{children}</button>
);

const Snap = ({ label, checked, onToggle }: { label: string; checked: boolean; onToggle?: () => void }) => (
  <label className="flex items-center gap-1">
    <span className="grid size-3 *:col-start-1 *:row-start-1">
      <input type="checkbox" checked={checked} disabled={!onToggle} onChange={onToggle} className="size-3 appearance-none border border-[#444] bg-white disabled:border-[#b8b8b8] disabled:bg-[#e6e6e6]" />
      {checked && <svg viewBox="0 0 12 12" className="pointer-events-none size-3" fill="none" stroke="#222" strokeWidth="1.200"><path d="M2.500 6l2.500 2.500L10 3" /></svg>}
    </span>
    {label}
  </label>
);

export default function App() {
  const [active, setActive] = useState('Set View');
  const [osnap, setOsnap] = useState<string[]>(snaps);

  const toggle = (name: string) => {
    setOsnap(osnap.includes(name) ? osnap.filter((s) => s !== name) : [...osnap, name]);
  };

  return (
    <div className="relative flex h-screen min-h-[720px] w-full flex-col overflow-hidden border-l border-black bg-[#eeeef8] font-['Open_Sans','Noto_Sans',sans-serif] text-[11px] leading-[14px] text-[#222]">
      {/* Title bar + menu */}
      <header className="h-10 shrink-0 bg-white">
        <div className="flex h-[22px] items-center pl-[2px]">
          <svg viewBox="0 0 16 16" className="size-4"><path d="M0 0h16v16H0z" fill="#111" /><path d="M2 2l3 4 3-3 2 3 4-3-1 5 2 2-4 2-2 3-3-3-3-1-2-4z" fill="#fff" /><path d="M7 8l3 2" stroke="#111" /></svg>
          <h1 className="ml-1 text-black">WATTER FALL PRINT FINAL SAN XUAT.3dm (26 MB) - Rhinoceros 7 Commercia - [Perspective]</h1>
          <div className="ml-auto flex gap-8 pr-[18px]">
            <button aria-label="Minimize"><svg viewBox="0 0 11 11" className="size-[11px]" stroke="#222"><path d="M0 6.500h10" /></svg></button>
            <button aria-label="Restore"><svg viewBox="0 0 11 11" className="size-[11px]" fill="none" stroke="#222" strokeWidth="1.200"><path d="M1 3h7v7H1zM3 3V1h7v7H8" /></svg></button>
            <button aria-label="Close"><svg viewBox="0 0 11 11" className="size-[11px]" stroke="#222" strokeWidth="1.200"><path d="M1 1l9 9M10 1l-9 9" /></svg></button>
          </div>
        </div>
        <nav className="flex h-[18px] items-center gap-3 pl-[7px] text-black">
          {menus.map((m) => <button key={m}>{m}</button>)}
        </nav>
      </header>

      {/* Toolbar tabs */}
      <div className="flex h-[60px] shrink-0 pt-1">
        <div className="ml-[3px] mt-1 h-12 w-[3px] border-x border-[#c6d2e6]" />
        <div className="flex-1 pr-[2px]">
          <div className="flex h-[17px] items-stretch border-b border-[#b7c8e4] pl-[10px]">
            {tabs.map((t) => (
              <button key={t} onClick={() => setActive(t)} className="relative mr-[18px] whitespace-nowrap text-[#333]">
                {active === t && (
                  <svg viewBox="0 0 68 17" preserveAspectRatio="none" className="absolute -left-4 top-0 h-[17px] w-[calc(100%+24px)]" fill="#eeeef8" stroke="#b7c8e4">
                    <path d="M0 17L11 .5h54l2.500 3V17" />
                  </svg>
                )}
                <span className="relative">{t}</span>
              </button>
            ))}
            <SmallGear className="ml-auto self-center text-[#777]" />
          </div>
          <div className="-ml-px flex h-[27px] items-center">
            {setViewIcons.map((icon, i) => icon === null
              ? <div key={i} className="mr-px h-7 w-[2px] shrink-0 border-r border-[#cdcdd8]" />
              : <button key={i} className="grid w-[27px] shrink-0 place-items-center"><Icon>{icon}</Icon></button>)}
          </div>
        </div>
      </div>

      <main className="flex min-h-0 flex-1">
        {/* Main palette */}
        <div className="w-[61px] shrink-0 pt-[3px]">
          <div className="ml-[3px] h-[3px] w-[52px] border-y border-[#c6d2e6]" />
          <div className="mt-px grid h-[506px] w-[54px] grid-cols-2 place-items-center">
            {mainTools.map((tool, i) => <button key={i}><Icon small>{tool}</Icon></button>)}
          </div>
        </div>

        {/* Viewport */}
        <div className="flex min-w-0 flex-1 flex-col">
          <div className="relative min-h-0 flex-1 overflow-hidden border border-[#b3c0d6] bg-[#9da4ad]">
            <Scene />
            <button className="absolute left-0 top-0 flex h-4 items-center bg-[#829cf0] pl-[6px] font-bold text-[#1c2440]">
              Perspective
              <span className="ml-[6px] flex h-[14px] w-[10px] items-center justify-center border-l border-[#222]"><svg viewBox="0 0 6 4" className="h-1 w-[6px]"><path d="M0 0h6L3 4z" fill="#111" /></svg></span>
            </button>
          </div>
          <div className="flex h-[21px] shrink-0 items-start">
            <button className="relative h-[19px] w-[47px] pl-1 text-[#111]">
              <svg viewBox="0 0 47 19" className="absolute inset-0 size-full" fill="none" stroke="#b9c6de"><path d="M.5 0v10l6 8.500h37q3 0 3-3V0" /></svg>
              Model
            </button>
            <button aria-label="Add layout" className="ml-2 mt-[5px]"><svg viewBox="0 0 10 10" className="size-[10px]" fill="#fff" stroke="#777"><path d="M3.500 1h3v2.500H9v3H6.500V9h-3V6.500H1v-3h2.500z" /></svg></button>
          </div>
        </div>

        {/* Panels */}
        <aside className="flex w-[304px] shrink-0 flex-col pb-1 pl-[7px] pt-[3px]">
          <div className="mb-[2px] h-[3px] shrink-0 border-y border-[#c6d2e6]" />
          <LayersPanel />
          <PropertiesPanel />
        </aside>
      </main>

      {/* Object snaps */}
      <div className="flex h-[28px] shrink-0 items-center border-b-2 border-[#e4e4ec] pt-px text-[#222]">
        <div className="ml-1 h-4 w-[3px] border-x border-[#c6d2e6]" />
        <div className="ml-[2px] flex items-center gap-[5px]">
          {snaps.map((s) => <Snap key={s} label={s} checked={osnap.includes(s)} onToggle={() => toggle(s)} />)}
          <Snap label="Project" checked={false} />
          <div className="ml-2"><Snap label="Disable" checked={false} /></div>
        </div>
      </div>

      {/* Command history */}
      <div className="flex h-[86px] shrink-0 border-b border-[#a9b7d0] pr-[2px]">
        <div className="ml-1 w-[3px] border-x border-[#c6d2e6]" />
        <div className="flex-1 bg-white pl-px text-black">
          {history.map((line) => <p key={line}>{line}</p>)}
        </div>
        <ScrollBar className="w-[14px]" above="grow-[35]" thumb="h-4" below="grow-[3]" />
      </div>
      <div className="mb-[3px] flex h-[17px] shrink-0 pr-[2px]">
        <div className="ml-1 w-[3px] border-x border-[#c6d2e6]" />
        <div className="flex flex-1 items-start bg-white pl-px">
          <label htmlFor="command" className="font-bold text-black">Command:</label>
          <span className="ml-1 mt-px h-[14px] w-px bg-black" />
          <input id="command" className="flex-1 bg-transparent outline-none" />
        </div>
        <div className="flex w-[13px] flex-col gap-px pt-px">
          <button aria-label="Previous" className="grid h-[7px] place-items-center border border-[#999] bg-[#eee]"><svg viewBox="0 0 6 3" className="h-[3px] w-[6px]"><path d="M0 3h6L3 0z" fill="#111" /></svg></button>
          <button aria-label="Next" className="grid h-[7px] place-items-center border border-[#999] bg-[#eee]"><svg viewBox="0 0 6 3" className="h-[3px] w-[6px]"><path d="M0 0h6L3 3z" fill="#111" /></svg></button>
        </div>
      </div>

      <footer className="flex h-[18px] shrink-0 border-t border-[#b9c6de]">
        <Pane className="w-[47px] pl-[7px]">CPlane</Pane>
        <Pane className="w-[83px] justify-center">x 14676.331</Pane>
        <Pane className="w-[84px] justify-center">y -12076.411</Pane>
        <Pane className="w-[84px] justify-center">z 0.000</Pane>
        <Pane className="w-[84px] justify-center">Millimeters</Pane>
        <Pane className="w-[160px] gap-[2px] pl-1"><span className="size-[13px] bg-black" />Default</Pane>
        <Pane className="w-[62px] justify-center">Grid Snap</Pane>
        <Pane on className="w-[43px] justify-center">Ortho</Pane>
        <Pane on className="w-[44px] justify-center">Planar</Pane>
        <Pane on className="w-[45px] justify-center">Osnap</Pane>
        <Pane on className="w-[70px] justify-center">SmartTrack</Pane>
        <Pane on className="w-[56px] justify-center">Gumball</Pane>
        <Pane className="w-[87px] justify-center">Record History</Pane>
        <Pane className="w-[38px] justify-center">Filter</Pane>
        <div className="mr-[6px] flex flex-1 items-center border-r border-[#b9c6de] pl-[2px] text-[#333]">Memory use: 675 MB</div>
      </footer>

      <SupportBar />
    </div>
  );
}
